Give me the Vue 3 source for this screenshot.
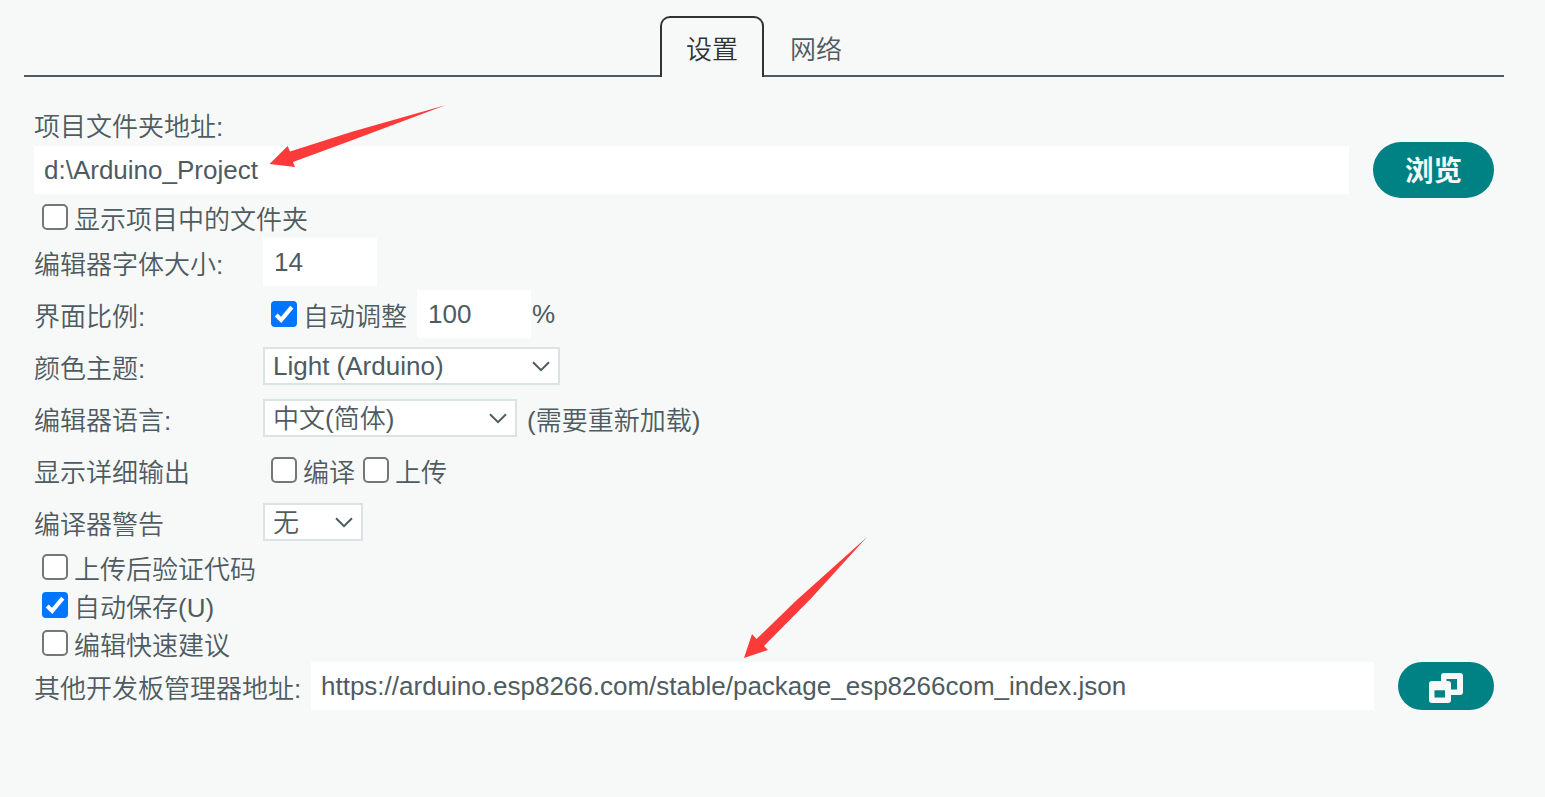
<script setup>
import { ref } from 'vue'

const tabs = ['设置', '网络']
const active = ref('设置')
const toggles = [
  { text: '上传后验证代码', on: false },
  { text: '自动保存(U)', on: true },
  { text: '编辑快速建议', on: false },
]
</script>

<template>
  <main class="dialog">
    <nav class="tabs">
      <div v-for="t in tabs" :key="t" class="tab" :class="{ active: t === active }" @click="active = t">{{ t }}</div>
    </nav>

    <section class="form">
      <div class="row title"><span class="txt">项目文件夹地址:</span></div>
      <div class="row path">
        <div class="field grow">d:\Arduino_Project</div>
        <button class="btn browse">浏览</button>
      </div>
      <div class="row check show"><i class="box"></i><span class="txt">显示项目中的文件夹</span></div>

      <div class="row wide">
        <span class="label txt">编辑器字体大小:</span>
        <div class="field num">14</div>
      </div>
      <div class="row wide">
        <span class="label txt">界面比例:</span>
        <i class="box on"><svg viewBox="0 0 26 26"><path d="M5.2 13.9 10.2 18.9 20.8 6.2" /></svg></i>
        <span class="txt auto">自动调整</span>
        <div class="field num">100</div>
        <span class="percent">%</span>
      </div>
      <div class="row wide">
        <span class="label txt">颜色主题:</span>
        <div class="select theme">Light (Arduino)<svg viewBox="0 0 18 11"><path d="M1 1.2 9 9.2 17 1.2" /></svg></div>
      </div>
      <div class="row wide">
        <span class="label txt">编辑器语言:</span>
        <div class="select lang">中文(简体)<svg viewBox="0 0 18 11"><path d="M1 1.2 9 9.2 17 1.2" /></svg></div>
        <span class="txt note">(需要重新加载)</span>
      </div>
      <div class="row wide">
        <span class="label txt">显示详细输出</span>
        <i class="box"></i><span class="txt">编译</span>
        <i class="box"></i><span class="txt">上传</span>
      </div>
      <div class="row wide">
        <span class="label txt">编译器警告</span>
        <div class="select warn">无<svg viewBox="0 0 18 11"><path d="M1 1.2 9 9.2 17 1.2" /></svg></div>
      </div>

      <div v-for="c in toggles" :key="c.text" class="row check">
        <i class="box" :class="{ on: c.on }"><svg v-if="c.on" viewBox="0 0 26 26"><path d="M5.2 13.9 10.2 18.9 20.8 6.2" /></svg></i>
        <span class="txt">{{ c.text }}</span>
      </div>

      <div class="row urls">
        <span class="txt">其他开发板管理器地址:</span>
        <div class="field grow">https://arduino.esp8266.com/stable/package_esp8266com_index.json</div>
        <button class="btn open">
          <svg viewBox="0 0 34 30">
            <rect class="plate" x="12" y="0" width="22" height="22" rx="3" />
            <rect class="hole" x="17.5" y="6" width="10.5" height="10.500" />
            <rect class="plate" x="0" y="8" width="22" height="22" rx="3" />
            <rect class="hole" x="5.500" y="17.300" width="10.500" height="7.200" />
          </svg>
        </button>
      </div>
    </section>

    <svg class="arrows" viewBox="0 0 1545 797">
      <path d="M446 105 352 131.700 290 151.500 287.700 146 269.500 164 295 167 293 162 352 140.300Z" />
      <path d="M867 537 796 600.800 756.500 639 752 634 744 658 768 650 764 646 811 598.500Z" />
    </svg>
  </main>
</template>

<style>
body {
  background: #f7f9f9;
}
</style>

<style scoped>
.dialog {
  position: relative;
  box-sizing: border-box;
  width: 1545px;
  height: 797px;
  padding: 16px 41px 0 24px;
  overflow: hidden;
  background: #f7f9f9;
  color: #4e5b61;
  font: 350 26px/38px "Liberation Sans", "Noto Sans CJK SC DemiLight", "Noto Sans CJK SC", sans-serif;
  white-space: nowrap;
}
.tabs {
  display: flex;
  justify-content: center;
  height: 61px;
  background: linear-gradient(#4e5b61, #4e5b61) left bottom / 100% 2px no-repeat;
}
.tab {
  box-sizing: border-box;
  width: 104px;
  height: 61px;
  padding-top: 13px;
  border: 2px solid transparent;
  border-bottom: 0;
  text-align: center;
}
.tab.active {
  border-color: #2e3334;
  border-radius: 10px 10px 0 0;
  background: #f7f9f9;
  color: #2e3334;
}
.form {
  padding: 30px 10px 0;
}
.row {
  display: flex;
  align-items: flex-start;
}
.txt {
  padding-top: 1px;
}
.title {
  height: 39px;
}
.path {
  height: 48px;
}
.field {
  box-sizing: border-box;
  height: 48px;
  padding-left: 10px;
  background: #fff;
  line-height: 48px;
}
.grow {
  flex: 1;
}
.num {
  width: 114px;
  padding-left: 11px;
}
.btn {
  display: flex;
  align-items: center;
  justify-content: center;
  margin: 0 0 0 24px;
  padding: 0;
  border: 0;
  border-radius: 28px;
  background: #008184;
  color: #f7f9f9;
  font: bold 28.6px/38px "Noto Sans CJK SC", sans-serif;
}
.browse {
  width: 121px;
  height: 56px;
  margin-top: -4px;
  padding-bottom: 2px;
}
.open {
  width: 96px;
  height: 48px;
}
.open svg {
  width: 34px;
  height: 30px;
  margin-top: 4px;
}
.plate {
  fill: #f7f9f9;
}
.hole {
  fill: #008184;
}
.box {
  box-sizing: border-box;
  width: 26px;
  height: 26px;
  margin: 4px 6px 0 8px;
  border: 2px solid #767676;
  border-radius: 5px;
  background: #fff;
}
.box.on {
  border: 0;
  border-radius: 4px;
  background: #0075ff;
}
.box svg {
  display: block;
  fill: none;
  stroke: #fff;
  stroke-width: 4.2;
}
.check {
  height: 38px;
}
.check.show {
  height: 44px;
}
.show .box {
  margin-top: 10px;
}
.show .txt {
  padding-top: 7px;
}
.check:nth-last-child(2) {
  height: 36px;
}
.wide {
  height: 52px;
}
.wide .txt {
  padding-top: 8px;
}
.label {
  width: 229px;
}
.wide .box {
  margin-top: 11px;
}
.auto {
  margin-right: 10px;
}
.percent {
  padding-left: 1px;
  line-height: 48px;
}
.select {
  position: relative;
  box-sizing: border-box;
  height: 38px;
  margin-top: 5px;
  padding-left: 8px;
  border: 2px solid #dae3e3;
  background: #fff;
  line-height: 34px;
}
.select svg {
  position: absolute;
  right: 8px;
  top: 12px;
  width: 18px;
  height: 11px;
  fill: none;
  stroke: #4e5b61;
  stroke-width: 2;
}
.theme {
  width: 297px;
}
.lang {
  width: 254px;
  line-height: 36px;
}
.warn {
  width: 100px;
  line-height: 36px;
}
.note {
  margin-left: 10px;
}
.urls .txt {
  width: 277px;
  padding-top: 8px;
}
.arrows {
  position: absolute;
  left: 0;
  top: 0;
  width: 1545px;
  height: 797px;
  fill: #fd3a3a;
  pointer-events: none;
}
</style>
